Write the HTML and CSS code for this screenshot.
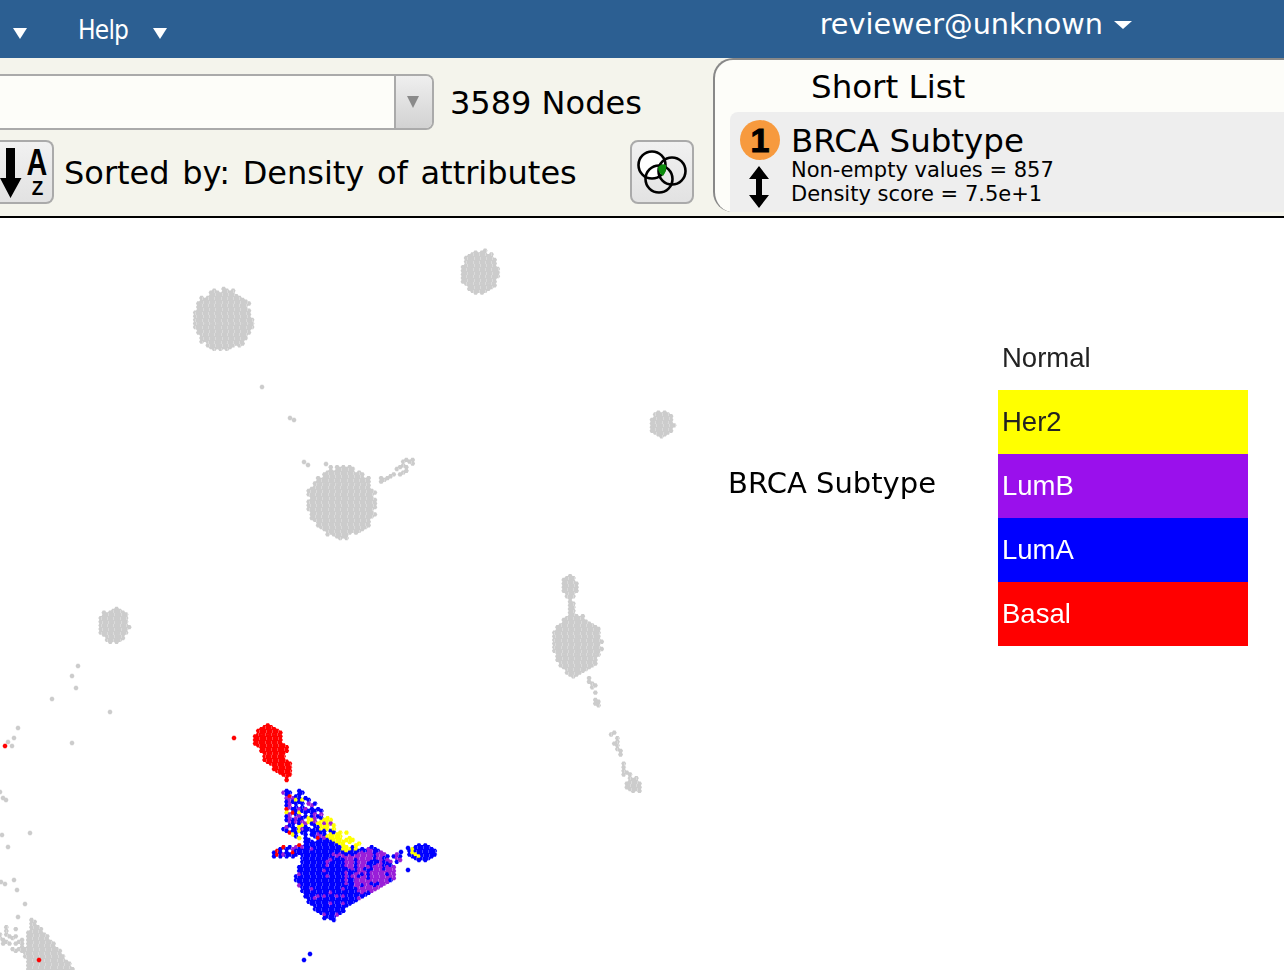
FILE: index.html
```html
<!DOCTYPE html>
<html lang="en">
<head>
  <meta charset="UTF-8">
  <meta name="viewport" content="width=device-width, initial-scale=1.0">
  <title>Attribute Map</title>
  <link rel="stylesheet" href="styles.css">
</head>
<body>
  <!-- Top Menu -->
  <header class="menu-bar">
    <span class="caret menu-first"></span>
    <span class="menu-item">Help</span>
    <span class="caret"></span>
    <span class="menu-user">reviewer@unknown</span>
    <span class="caret-wide"></span>
  </header>

  <div class="toolbar">
    <div class="controls">
      <div class="search-row">
        <div class="combo">
          <div class="combo-input"></div>
          <div class="combo-button"><span class="combo-arrow"></span></div>
        </div>
        <span class="node-count">3589 Nodes</span>
      </div>
      <div class="sort-row">
        <button class="tool-button sort-button">
          <svg class="sort-arrow" width="22" height="50" viewBox="0 0 22 50">
            <path d="M6 0h9v30h6.5L10.5 50 0 30h6z" fill="#000"/>
          </svg>
          <span class="sort-letters"><b>A</b><b class="letter-z">Z</b></span>
        </button>
        <span class="sort-label">Sorted by: Density of attributes</span>
        <button class="tool-button venn-button">
          <svg width="50" height="48" viewBox="0 0 50 48">
            <g fill="#fff" stroke="#000" stroke-width="2.6">
              <circle cx="15" cy="17" r="13.5"/>
              <circle cx="35" cy="23" r="13.5" fill="none"/>
              <circle cx="22" cy="31" r="13.5" fill="none"/>
            </g>
            <path d="M21 19Q25 15 29 17Q30 23 26 28Q21 25 21 19z" fill="#0a8a0a"/>
          </svg>
        </button>
      </div>
    </div>

    <!-- Short List Panel -->
    <aside class="short-list">
      <h2 class="short-title">Short List</h2>
      <div class="short-item">
        <div class="item-icons">
          <span class="badge">1</span>
          <svg class="move-icon" width="22" height="42" viewBox="0 0 22 42">
            <path d="M11 0l10 13h-7v16h7L11 42 1 29h7V13H1z" fill="#000"/>
          </svg>
        </div>
        <div class="item-text">
          <div class="item-name">BRCA Subtype</div>
          <div class="item-meta">Non-empty values = 857</div>
          <div class="item-meta">Density score = 7.5e+1</div>
        </div>
      </div>
    </aside>
  </div>

  <main class="map-area">
    <canvas id="nodeMap" class="node-map" width="1284" height="752"></canvas>
    <div class="legend-wrap">
      <span class="legend-title">BRCA Subtype</span>
      <ul class="legend">
        <li class="legend-row"><span class="legend-label">Normal</span></li>
        <li class="legend-row her2"><span class="legend-label">Her2</span></li>
        <li class="legend-row lumb"><span class="legend-label">LumB</span></li>
        <li class="legend-row luma"><span class="legend-label">LumA</span></li>
        <li class="legend-row basal"><span class="legend-label">Basal</span></li>
      </ul>
    </div>
  </main>

  <script src="script.js"></script>
</body>
</html>
```

FILE: styles.css
```css
* {
  box-sizing: border-box;
}
html, body {
  height: 100%;
}
body {
  margin: 0;
  overflow: hidden;
  background-color: #fff;
  color: #000;
  font-family: "DejaVu Sans", Verdana, sans-serif;
}

/* Top menu */
.menu-bar {
  display: flex;
  align-items: flex-start;
  height: 58px;
  padding-right: 152px;
  background-color: #2c5f92;
  color: #fff;
}
.menu-first {
  margin-left: 13px;
}
.caret {
  width: 0;
  height: 0;
  margin-top: 28px;
  border-left: 7px solid transparent;
  border-right: 7px solid transparent;
  border-top: 11px solid #fff;
}
.menu-item {
  margin-left: 51px;
  margin-right: 25px;
  padding-top: 13px;
  font-size: 26px;
  font-stretch: condensed;
  letter-spacing: -.8px;
  line-height: 34px;
}
.menu-user {
  margin-left: auto;
  padding-top: 7px;
  font-size: 28.7px;
  line-height: 34px;
}
.caret-wide {
  width: 0;
  height: 0;
  margin: 21px 0 0 11px;
  border-left: 9px solid transparent;
  border-right: 9px solid transparent;
  border-top: 8px solid #fff;
}

/* Toolbar */
.toolbar {
  display: flex;
  height: 160px;
  background-color: #f4f4ec;
  border-bottom: 2px solid #000;
}
.controls {
  width: 713px;
  flex: none;
  padding-top: 16px;
}
.search-row {
  display: flex;
  align-items: center;
  height: 56px;
}
.combo {
  display: flex;
  width: 434px;
  height: 56px;
  border: 2px solid #aaa;
  border-left: none;
  border-radius: 0 8px 8px 0;
  overflow: hidden;
}
.combo-input {
  flex: 1;
  background-color: #fdfdf9;
  border-right: 2px solid #aaa;
}
.combo-button {
  display: flex;
  align-items: center;
  justify-content: center;
  width: 36px;
  padding-right: 2px;
  background: linear-gradient(#efefef, #d2d2d2);
}
.combo-arrow {
  width: 0;
  height: 0;
  border-left: 6px solid transparent;
  border-right: 6px solid transparent;
  border-top: 12px solid #8a8a8a;
}
.node-count {
  margin-left: 16px;
  margin-top: 2px;
  font-size: 32px;
}
.sort-row {
  display: flex;
  align-items: center;
  height: 64px;
  margin-top: 10px;
}
.tool-button {
  display: flex;
  height: 64px;
  padding: 0;
  border: 2px solid #aaa;
  background: linear-gradient(#f1f1f1, #e2e2e2);
  cursor: pointer;
}
.sort-button {
  align-items: center;
  width: 54px;
  border-left: none;
  border-radius: 0 8px 8px 0;
}
.sort-arrow {
  flex: none;
  margin-top: 1px;
}
.sort-letters {
  display: flex;
  flex-direction: column;
  align-items: center;
  width: 20px;
  margin-left: 5px;
  font-family: "Liberation Sans", Arial, sans-serif;
  line-height: 1;
}
.sort-letters b {
  font-size: 36px;
  line-height: 31px;
  transform: scaleX(.8);
}
.sort-letters .letter-z {
  font-size: 21px;
  line-height: 20px;
  transform: scaleX(.9);
}
.sort-label {
  margin-left: 10px;
  margin-top: 2px;
  width: 566px;
  font-size: 32px;
  word-spacing: 2.5px;
}
.venn-button {
  align-items: center;
  justify-content: center;
  width: 64px;
  border-radius: 8px;
}

/* Short list */
.short-list {
  flex: 1;
  height: 154px;
  padding: 0 0 0 15px;
  background-color: #fdfdf9;
  border-top: 2px solid #888;
  border-left: 2px solid #888;
  border-radius: 20px 0 0 20px;
  overflow: hidden;
}
.short-title {
  margin: 0;
  padding-left: 81px;
  height: 52px;
  padding-top: 1px;
  font-size: 32.5px;
  font-weight: normal;
  line-height: 52px;
}
.short-item {
  display: flex;
  height: 100px;
  padding: 8px 0 0 10px;
  background-color: #eeeeee;
  border-radius: 8px 0 0 0;
}
.item-icons {
  display: flex;
  flex-direction: column;
  align-items: center;
  width: 40px;
}
.badge {
  width: 40px;
  height: 40px;
  margin-bottom: 6px;
  border-radius: 50%;
  background-color: #f79a3e;
  font-family: "Liberation Sans", Arial, sans-serif;
  font-size: 34px;
  font-weight: bold;
  -webkit-text-stroke: 1px #000;
  line-height: 40px;
  text-align: center;
}
.move-icon {
  margin-right: 2px;
}
.item-text {
  margin-left: 11px;
  padding-top: 2px;
}
.item-name {
  font-size: 32.5px;
  line-height: 38px;
}
.item-meta {
  font-size: 21px;
  line-height: 24px;
}
.item-name + .item-meta {
  margin-top: -2px;
}

/* Map */
.map-area {
  position: relative;
  height: 752px;
  overflow: hidden;
}
.node-map {
  position: absolute;
  top: 0;
  left: 0;
}
.legend-wrap {
  position: absolute;
  top: 108px;
  right: 36px;
  display: flex;
  align-items: center;
  gap: 62px;
}
.legend-title {
  margin-bottom: 6px;
  font-size: 29px;
}
.legend {
  width: 250px;
  margin: 0;
  padding: 0;
  list-style: none;
  font-family: "Liberation Sans", Arial, sans-serif;
  font-size: 27.5px;
}
.legend-row {
  height: 64px;
  padding-left: 4px;
  line-height: 64px;
  color: #222;
}
.legend-label {
  display: inline-block;
  filter: blur(.4px);
}
.her2 {
  background-color: #ffff00;
}
.lumb {
  background-color: #9a10ec;
  color: #fff;
}
.luma {
  background-color: #0000ff;
  color: #fff;
}
.basal {
  background-color: #ff0000;
  color: #fff;
}
```

FILE: script.js
```js
const GRAY = '#cccccc';
const RED = '#ff0000';
const BLUE = '#0000ff';
const PURPLE = '#9a1fd8';
const YELLOW = '#ffff00';

// Map top in page coordinates
const MAP_TOP = 218;
const HEX_R = 2.1;
const DRAW_R = 2.5;
const COL_STEP = HEX_R * 1.5;
const ROW_STEP = HEX_R * Math.sqrt(3);

// Small seeded random so the picture is the same on every load
let seed = 20417;
function rand() {
  seed = (seed * 16807) % 2147483647;
  return seed / 2147483647;
}

function ellipse(cx, cy, rx, ry, colors) {
  return { cx, cy, rx, ry, colors: colors || [[GRAY, 1]] };
}

function poly(points, colors, fill) {
  return { points, colors: colors || [[GRAY, 1]], fill: fill === undefined ? 1 : fill };
}

// points given in the 3x crop of the cluster
function z(points) {
  return points.map(p => [p[0] / 3 + 220, p[1] / 3 + 710]);
}

const MIX_BAND = [[BLUE, .6], [PURPLE, .22], [YELLOW, .12], [RED, .06]];
const MIX_BLUE = [[BLUE, .94], [PURPLE, .06]];
const MIX_SOFT = [[BLUE, .85], [PURPLE, .15]];
const MIX_PURPLE = [[PURPLE, .72], [BLUE, .28]];

// Later regions paint over earlier ones
const regions = [
  ellipse(223, 320, 29, 31),
  ellipse(480, 272, 19, 21),
  ellipse(342, 502, 34, 35),
  ellipse(662, 424, 12, 13),
  ellipse(114, 626, 15, 17),
  ellipse(577, 645, 24, 31),
  ellipse(570, 587, 8, 11),
  poly([[567, 595], [573, 595], [574, 614], [570, 614]]),
  poly([[378, 479], [392, 473], [404, 460], [416, 456], [412, 468], [398, 476], [380, 483]], null, .75),
  poly([[588, 675], [593, 675], [602, 706], [597, 708], [590, 692]], null, .7),
  poly([[610, 732], [616, 732], [624, 760], [638, 778], [642, 792], [628, 792], [622, 770]], null, .55),
  ellipse(634, 786, 6, 6),
  poly([[30, 916], [40, 926], [58, 948], [76, 972], [28, 972], [24, 950], [28, 935]]),
  poly([[0, 926], [24, 930], [26, 960], [0, 945]], null, .4),
  poly(z([[105, 70], [140, 42], [185, 60], [190, 100], [205, 110], [195, 140], [215, 165], [212, 190], [202, 222], [190, 200], [165, 180], [130, 150], [120, 120], [102, 100]]), [[RED, 1]]),
  poly(z([[185, 235], [245, 240], [345, 340], [345, 400], [250, 400], [190, 360], [200, 300]]), MIX_BAND, .75),
  poly(z([[155, 415], [250, 405], [250, 445], [155, 440]]), [[BLUE, .7], [PURPLE, .15], [RED, .15]], .9),
  poly(z([[225, 510], [245, 440], [260, 395], [330, 385], [400, 420], [460, 410], [530, 470], [530, 500], [470, 535], [400, 575], [340, 632], [310, 625], [265, 580], [240, 540]]), MIX_BLUE),
  poly(z([[340, 430], [400, 420], [400, 575], [340, 625]]), MIX_SOFT),
  poly(z([[385, 440], [460, 410], [530, 480], [520, 510], [470, 540], [420, 555], [395, 500]]), MIX_PURPLE),
  poly(z([[460, 425], [555, 435], [530, 470], [490, 460]]), [[PURPLE, .6], [BLUE, .4]], .6),
  poly(z([[298, 325], [348, 322], [342, 362], [298, 362]]), [[YELLOW, .92], [PURPLE, .08]], .8),
  poly(z([[325, 365], [380, 368], [422, 395], [412, 425], [385, 438], [350, 400], [320, 385]]), [[YELLOW, .96], [BLUE, .04]], .8),
  ellipse(423, 853, 14, 8, [[BLUE, .92], [YELLOW, .08]])
];

// Lone nodes scattered over the map
const singles = [
  [262, 387, GRAY], [290, 418, GRAY], [294, 420, GRAY], [304, 462, GRAY], [308, 465, GRAY], [326, 464, GRAY],
  [78, 666, GRAY], [72, 676, GRAY], [76, 688, GRAY], [52, 699, GRAY], [110, 712, GRAY],
  [18, 728, GRAY], [14, 738, GRAY], [8, 742, GRAY], [12, 746, GRAY], [5, 746, RED], [72, 743, GRAY],
  [0, 792, GRAY], [3, 798, GRAY], [6, 800, GRAY], [2, 835, GRAY], [30, 833, GRAY], [8, 847, GRAY],
  [14, 880, GRAY], [1, 882, GRAY], [5, 884, GRAY], [17, 890, GRAY], [25, 904, GRAY], [18, 917, GRAY],
  [234, 738, RED], [39, 960, RED], [310, 954, BLUE], [304, 960, BLUE],
  [408, 848, BLUE], [401, 852, BLUE], [408, 870, BLUE]
];

function inPoly(x, y, pts) {
  let inside = false;
  for (let i = 0, j = pts.length - 1; i < pts.length; j = i++) {
    const a = pts[i], b = pts[j];
    if ((a[1] > y) !== (b[1] > y) && x < (b[0] - a[0]) * (y - a[1]) / (b[1] - a[1]) + a[0]) {
      inside = !inside;
    }
  }
  return inside;
}

function pickColor(colors) {
  let r = rand();
  for (const c of colors) {
    if (r < c[1]) return c[0];
    r -= c[1];
  }
  return colors[0][0];
}

function colorAt(x, y) {
  let color = null;
  regions.forEach(region => {
    const r = rand();
    if (region.points) {
      if (inPoly(x, y, region.points) && r < region.fill) color = pickColor(region.colors);
    } else {
      const dx = (x - region.cx) / region.rx;
      const dy = (y - region.cy) / region.ry;
      if (Math.sqrt(dx * dx + dy * dy) + (r - .5) * .12 < 1) color = pickColor(region.colors);
    }
  });
  return color;
}

function drawHex(ctx, x, y, color) {
  ctx.fillStyle = color;
  ctx.beginPath();
  for (let i = 0; i < 6; i++) {
    const a = i * Math.PI / 3;
    const px = x + DRAW_R * Math.cos(a);
    const py = y - MAP_TOP + DRAW_R * Math.sin(a);
    if (i === 0) ctx.moveTo(px, py);
    else ctx.lineTo(px, py);
  }
  ctx.closePath();
  ctx.fill();
}

const ctx = document.getElementById('nodeMap').getContext('2d');
const cells = [];
for (let col = 0; col * COL_STEP < 700; col++) {
  const x = col * COL_STEP;
  for (let row = 0; row * ROW_STEP < 760; row++) {
    const y = MAP_TOP + row * ROW_STEP + (col % 2 ? ROW_STEP / 2 : 0);
    const color = colorAt(x, y);
    if (color) cells.push({ x, y, col, row, color });
  }
}
cells.forEach(c => drawHex(ctx, c.x, c.y, c.color));

// Pale zigzag seams between every other column, as in the rendered map
ctx.fillStyle = 'rgba(255, 255, 255, .28)';
cells.forEach(c => {
  if (c.col % 2 === 0) {
    ctx.fillRect(Math.round(c.x) + (c.row % 2), Math.round(c.y - MAP_TOP) - 1, 1, 3);
  }
});
singles.forEach(n => drawHex(ctx, n[0], n[1], n[2]));
```
